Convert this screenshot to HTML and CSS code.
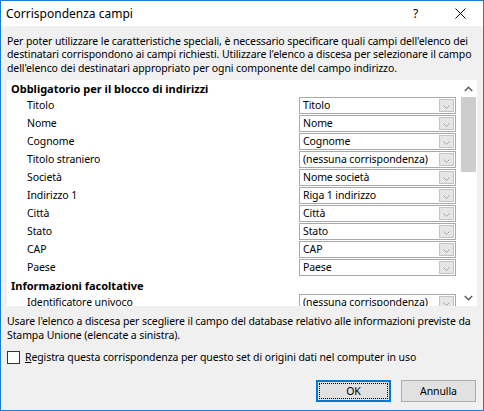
FILE: index.html
```html
<!DOCTYPE html>
<html lang="it">
<head>
<meta charset="utf-8">
<title>Corrispondenza campi</title>
<link rel="stylesheet" href="styles.css">
</head>
<body>
<div class="dialog">
  <div class="titlebar">
    <span class="title">Corrispondenza campi</span>
    <span class="help">?</span>
    <span class="close"><svg width="11" height="11" viewBox="0 0 11 11"><path d="M0.5 0.5L10.5 10.5M10.5 0.5L0.5 10.5" stroke="#000" stroke-width="1" fill="none"/></svg></span>
  </div>
  <div class="content">
    <p class="desc">Per poter utilizzare le caratteristiche speciali, è necessario specificare quali campi dell'elenco dei<br>destinatari corrispondono ai campi richiesti. Utilizzare l'elenco a discesa per selezionare il campo<br>dell'elenco dei destinatari appropriato per ogni componente del campo indirizzo.</p>
    <div class="panel">
      <div class="list">
        <div class="group">Obbligatorio per il blocco di indirizzi</div>
        <div class="row"><span class="label">Titolo</span><div class="combo"><span class="val">Titolo</span><span class="btn"><svg width="7" height="4" viewBox="0 0 7 4"><path d="M0.5 0.5L3.5 3.5L6.5 0.5" stroke="#a6a6a6" fill="none"/></svg></span></div></div>
        <div class="row"><span class="label">Nome</span><div class="combo"><span class="val">Nome</span><span class="btn"><svg width="7" height="4" viewBox="0 0 7 4"><path d="M0.5 0.5L3.5 3.5L6.5 0.5" stroke="#a6a6a6" fill="none"/></svg></span></div></div>
        <div class="row"><span class="label">Cognome</span><div class="combo"><span class="val">Cognome</span><span class="btn"><svg width="7" height="4" viewBox="0 0 7 4"><path d="M0.5 0.5L3.5 3.5L6.5 0.5" stroke="#a6a6a6" fill="none"/></svg></span></div></div>
        <div class="row"><span class="label">Titolo straniero</span><div class="combo"><span class="val">(nessuna corrispondenza)</span><span class="btn"><svg width="7" height="4" viewBox="0 0 7 4"><path d="M0.5 0.5L3.5 3.5L6.5 0.5" stroke="#a6a6a6" fill="none"/></svg></span></div></div>
        <div class="row"><span class="label">Società</span><div class="combo"><span class="val">Nome società</span><span class="btn"><svg width="7" height="4" viewBox="0 0 7 4"><path d="M0.5 0.5L3.5 3.5L6.5 0.5" stroke="#a6a6a6" fill="none"/></svg></span></div></div>
        <div class="row"><span class="label">Indirizzo 1</span><div class="combo"><span class="val">Riga 1 indirizzo</span><span class="btn"><svg width="7" height="4" viewBox="0 0 7 4"><path d="M0.5 0.5L3.5 3.5L6.5 0.5" stroke="#a6a6a6" fill="none"/></svg></span></div></div>
        <div class="row"><span class="label">Città</span><div class="combo"><span class="val">Città</span><span class="btn"><svg width="7" height="4" viewBox="0 0 7 4"><path d="M0.5 0.5L3.5 3.5L6.5 0.5" stroke="#a6a6a6" fill="none"/></svg></span></div></div>
        <div class="row"><span class="label">Stato</span><div class="combo"><span class="val">Stato</span><span class="btn"><svg width="7" height="4" viewBox="0 0 7 4"><path d="M0.5 0.5L3.5 3.5L6.5 0.5" stroke="#a6a6a6" fill="none"/></svg></span></div></div>
        <div class="row"><span class="label">CAP</span><div class="combo"><span class="val">CAP</span><span class="btn"><svg width="7" height="4" viewBox="0 0 7 4"><path d="M0.5 0.5L3.5 3.5L6.5 0.5" stroke="#a6a6a6" fill="none"/></svg></span></div></div>
        <div class="row"><span class="label">Paese</span><div class="combo"><span class="val">Paese</span><span class="btn"><svg width="7" height="4" viewBox="0 0 7 4"><path d="M0.5 0.5L3.5 3.5L6.5 0.5" stroke="#a6a6a6" fill="none"/></svg></span></div></div>
        <div class="group">Informazioni facoltative</div>
        <div class="row"><span class="label">Identificatore univoco</span><div class="combo"><span class="val">(nessuna corrispondenza)</span><span class="btn"><svg width="7" height="4" viewBox="0 0 7 4"><path d="M0.5 0.5L3.5 3.5L6.5 0.5" stroke="#a6a6a6" fill="none"/></svg></span></div></div>
      </div>
      <div class="scrollbar">
        <span class="arrow"><svg width="9" height="6" viewBox="0 0 9 6"><path d="M0.8 5L4.5 1.3L8.2 5" stroke="#606060" stroke-width="1.6" fill="none"/></svg></span>
        <span class="thumb"></span>
        <span class="track"></span>
        <span class="arrow"><svg width="9" height="6" viewBox="0 0 9 6"><path d="M0.8 1L4.5 4.7L8.2 1" stroke="#606060" stroke-width="1.6" fill="none"/></svg></span>
      </div>
    </div>
    <p class="note">Usare l'elenco a discesa per scegliere il campo del database relativo alle informazioni previste da<br>Stampa Unione (elencate a sinistra).</p>
    <label class="check"><span class="box"></span><span><u>R</u>egistra questa corrispondenza per questo set di origini dati nel computer in uso</span></label>
    <div class="buttons">
      <button class="button default"><span class="focus">OK</span></button>
      <button class="button">Annulla</button>
    </div>
  </div>
</div>
</body>
</html>
```
FILE: styles.css
```css
* { box-sizing: border-box; }
html, body { margin: 0; padding: 0; }
body {
  width: 484px;
  height: 411px;
  font-family: "Noto Sans", "Open Sans", sans-serif;
  font-size: 10.5px;
  letter-spacing: -0.1px;
  color: #000;
  background: #f0f0f0;
}
.dialog {
  width: 484px;
  height: 411px;
  border: 1px solid #1a7fd4;
  background: #f0f0f0;
  display: flex;
  flex-direction: column;
}
.titlebar {
  height: 25px;
  background: #fff;
  display: flex;
  align-items: center;
  padding-left: 5px;
}
.title { font-size: 12px; letter-spacing: 0; flex: 1; }
.help { font-size: 12px; width: 45px; text-align: center; }
.close { width: 45px; display: flex; justify-content: center; }
.content {
  flex: 1;
  padding: 9px 6px 0 6px;
  display: flex;
  flex-direction: column;
}
.desc, .note {
  margin: 0;
  line-height: 13.4px;
  white-space: nowrap;
}
.panel {
  margin-top: 5px;
  height: 226px;
  background: #fff;
  display: flex;
  overflow: hidden;
}
.list {
  flex: 1;
  padding-right: 4px;
  overflow: hidden;
}
.group {
  height: 17px;
  line-height: 17px;
  font-weight: bold;
  font-size: 11px;
  letter-spacing: 0;
  padding-left: 4px;
}
.row {
  height: 18px;
  display: flex;
  align-items: flex-start;
}
.label {
  flex: 1;
  padding-left: 20px;
  line-height: 17px;
}
.combo {
  width: 157px;
  height: 17px;
  border: 1px solid #a9a9a9;
  display: flex;
  background: #fff;
}
.val {
  flex: 1;
  padding-left: 3px;
  line-height: 15px;
  white-space: nowrap;
  overflow: hidden;
}
.btn {
  width: 15px;
  margin: 1px 1px 1px 0;
  background: #e6e6e6;
  border: 1px solid #c4c4c4;
  display: flex;
  justify-content: center;
  align-items: flex-end;
  padding-bottom: 2px;
}
.btn svg { display: block; }
.scrollbar {
  width: 17px;
  display: flex;
  flex-direction: column;
}
.arrow {
  height: 17px;
  display: flex;
  justify-content: center;
  align-items: center;
}
.thumb {
  height: 75px;
  margin: 0 1px;
  background: #cdcdcd;
}
.track { flex: 1; }
.note { margin-top: 9px; }
.check {
  margin-top: 8px;
  display: flex;
  align-items: center;
  gap: 5px;
}
.box {
  width: 13px;
  height: 13px;
  border: 1px solid #333;
  background: #fff;
}
.buttons {
  margin-top: 16px;
  display: flex;
  justify-content: flex-end;
  gap: 10px;
  padding-right: 1px;
}
.button {
  width: 75px;
  height: 22px;
  border: 1px solid #adadad;
  background: #e1e1e1;
  font-family: inherit;
  font-size: 10.5px;
  letter-spacing: -0.1px;
  color: #000;
  padding: 0;
}
.button.default {
  border: 2px solid #0078d7;
  padding: 1px;
}
.focus {
  display: flex;
  width: 100%;
  height: 100%;
  border: 1px dotted #000;
  align-items: center;
  justify-content: center;
}
```
